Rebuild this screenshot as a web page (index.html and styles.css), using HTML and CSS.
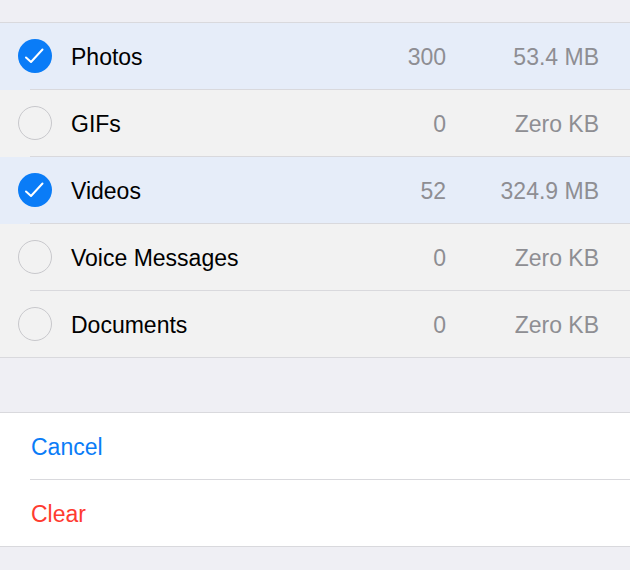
FILE: index.html
```html
<!DOCTYPE html>
<html>
<head>
<meta charset="utf-8">
<link rel="stylesheet" href="styles.css">
</head>
<body>
<div class="screen">
  <div class="top-gap"></div>
  <div class="group">
    <div class="row selected">
      <span class="check on"><svg viewBox="0 0 34 34" width="34" height="34"><circle cx="17" cy="17" r="17" fill="#0a7cf7"/><path d="M8 18.5 L13 23 L24.5 10.5" fill="none" stroke="#fff" stroke-width="2" stroke-linecap="round" stroke-linejoin="round"/></svg></span>
      <span class="label">Photos</span>
      <span class="count">300</span>
      <span class="size">53.4 MB</span>
    </div>
    <div class="row">
      <span class="check"></span>
      <span class="label">GIFs</span>
      <span class="count">0</span>
      <span class="size">Zero KB</span>
    </div>
    <div class="row selected">
      <span class="check on"><svg viewBox="0 0 34 34" width="34" height="34"><circle cx="17" cy="17" r="17" fill="#0a7cf7"/><path d="M8 18.5 L13 23 L24.5 10.5" fill="none" stroke="#fff" stroke-width="2" stroke-linecap="round" stroke-linejoin="round"/></svg></span>
      <span class="label">Videos</span>
      <span class="count">52</span>
      <span class="size">324.9 MB</span>
    </div>
    <div class="row">
      <span class="check"></span>
      <span class="label">Voice Messages</span>
      <span class="count">0</span>
      <span class="size">Zero KB</span>
    </div>
    <div class="row last">
      <span class="check"></span>
      <span class="label">Documents</span>
      <span class="count">0</span>
      <span class="size">Zero KB</span>
    </div>
  </div>
  <div class="mid-gap"></div>
  <div class="group actions">
    <div class="row action blue">Cancel</div>
    <div class="row action red last">Clear</div>
  </div>
</div>
</body>
</html>
```
FILE: styles.css
```css
html, body {
  margin: 0;
  padding: 0;
  background: #efeff4;
}
.screen {
  width: 630px;
  height: 570px;
  overflow: hidden;
  background: #efeff4;
  font-family: "Liberation Sans", Arial, sans-serif;
  font-size: 23px;
  color: #000;
}
.top-gap {
  height: 22px;
}
.mid-gap {
  height: 54px;
}
.group {
  border-top: 1px solid #d9d9dd;
  border-bottom: 1px solid #d9d9dd;
  background: #f2f2f2;
}
.actions {
  background: #fff;
}
.row {
  position: relative;
  height: 67px;
  box-sizing: border-box;
  padding-bottom: 1px;
  display: flex;
  align-items: center;
  background: #f2f2f2;
}
.row.selected {
  background: #e6edf9;
}
.row::after {
  content: "";
  position: absolute;
  left: 30px;
  right: 0;
  bottom: 0;
  height: 1px;
  background: #d9d9dd;
}
.row.last {
  height: 66px;
  padding-bottom: 0;
}
.row.last::after {
  display: none;
}
.check {
  width: 34px;
  height: 34px;
  margin-left: 18px;
  box-sizing: border-box;
  border: 1.5px solid #c8c8cc;
  border-radius: 50%;
  flex: none;
}
.check.on {
  border: none;
}
.check svg {
  display: block;
}
.label,
.count,
.size,
.action {
  padding-top: 2px;
}
.label {
  margin-left: 19px;
  flex: 1;
}
.count {
  color: #8e8e93;
  text-align: right;
}
.size {
  color: #8e8e93;
  width: 153px;
  padding-right: 31px;
  text-align: right;
}
.action {
  background: #fff;
  padding-left: 31px;
}
.blue {
  color: #0a7cf7;
}
.red {
  color: #ff3b30;
}
```
